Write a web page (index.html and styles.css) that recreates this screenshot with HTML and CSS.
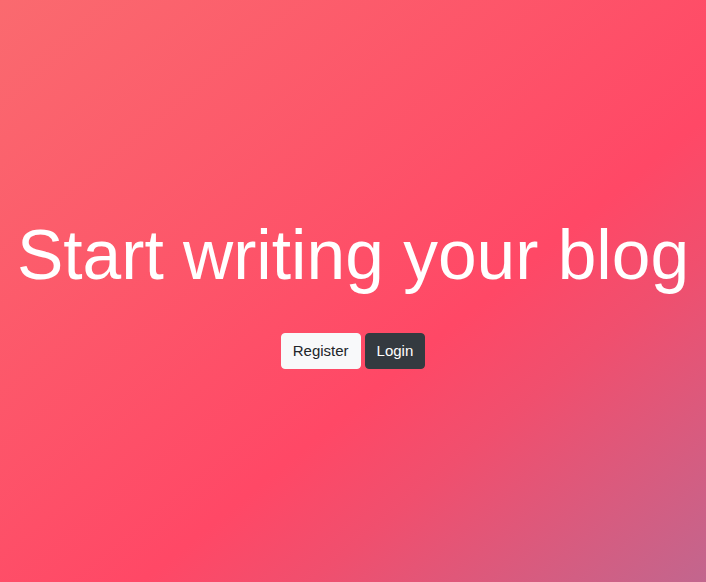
FILE: index.html
```html
<!DOCTYPE html>
<html lang="en">
<head>
<meta charset="utf-8">
<title>Start writing your blog</title>
<link rel="stylesheet" href="styles.css">
</head>
<body>
<main class="hero">
  <h1 class="hero-title">Start writing your blog</h1>
  <div class="hero-actions">
    <a class="btn btn-light" href="#">Register</a>
    <a class="btn btn-dark" href="#">Login</a>
  </div>
</main>
</body>
</html>
```

FILE: styles.css
```css
html, body {
  margin: 0;
  padding: 0;
  height: 100%;
}
body {
  font-family: "Liberation Sans", Arial, sans-serif;
  background: linear-gradient(to bottom right, #fa6a6f 0%, #ff4866 60%, #f04f6e 72%, #c2668e 100%);
  color: #fff;
}
.hero {
  min-height: 100vh;
  display: flex;
  flex-direction: column;
  align-items: center;
  justify-content: center;
}
.hero-title {
  margin: 0 0 36px;
  font-size: 69.5px;
  font-weight: 400;
  line-height: 84px;
  color: #fff;
  white-space: nowrap;
}
.hero-actions {
  display: flex;
  gap: 4px;
}
.btn {
  display: inline-block;
  box-sizing: border-box;
  height: 36px;
  padding: 6px 11px;
  font-size: 15px;
  line-height: 22px;
  border: 1px solid transparent;
  border-radius: 4px;
  text-decoration: none;
}
.btn-light {
  background: #f8f9fa;
  border-color: #f8f9fa;
  color: #212529;
}
.btn-dark {
  background: #343a40;
  border-color: #343a40;
  color: #fff;
}
```
